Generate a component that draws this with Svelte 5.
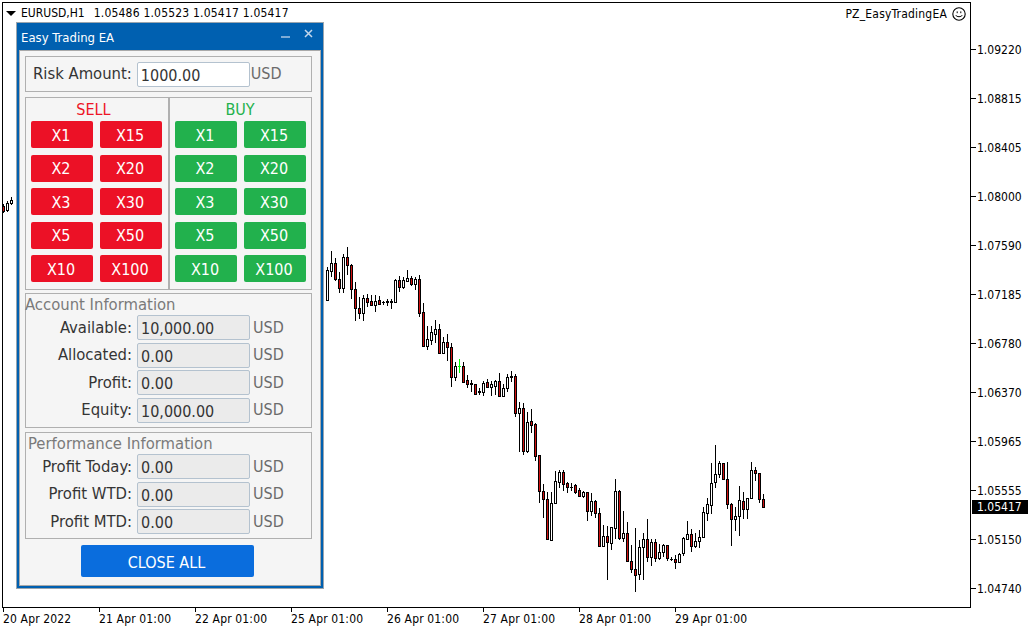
<script lang="ts">
  // values are [x, wickTop, wickBottom, bodyTop, bodyBottom, kind]
  // kind: w = up candle, r = down candle, d = doji, g = green doji
  const candles: [number, number, number, number, number, string][] = [
    [327, 267, 301, 270, 300, "w"], [331, 251, 277, 263, 271, "w"], [335, 258, 281, 263, 279, "r"],
    [339, 272, 293, 279, 288, "r"], [343, 254, 293, 257, 288, "w"], [347, 247, 275, 257, 265, "r"],
    [351, 264, 299, 265, 289, "r"], [355, 282, 321, 289, 308, "r"], [359, 297, 319, 308, 313, "r"],
    [363, 295, 321, 298, 313, "w"], [367, 294, 307, 298, 302, "r"], [371, 295, 306, 301, 305, "r"],
    [375, 295, 312, 301, 305, "w"], [379, 296, 305, 300, 304, "r"], [383, 301, 305, 302, 303, "d"],
    [387, 299, 306, 301, 303, "d"], [391, 299, 309, 301, 303, "d"], [395, 279, 303, 280, 302, "w"],
    [399, 276, 292, 280, 287, "r"], [403, 277, 289, 280, 287, "w"], [407, 270, 282, 278, 281, "w"],
    [411, 276, 286, 278, 284, "r"], [415, 277, 290, 279, 284, "w"], [419, 275, 317, 279, 313, "r"],
    [423, 303, 346, 312, 346, "r"], [427, 326, 350, 339, 346, "w"], [431, 326, 345, 332, 340, "w"],
    [435, 320, 343, 329, 334, "w"], [439, 324, 354, 329, 353, "r"], [443, 337, 353, 342, 353, "w"],
    [447, 334, 361, 342, 347, "r"], [451, 343, 387, 347, 377, "r"], [455, 362, 381, 366, 377, "w"],
    [459, 359, 373, 366, 367, "g"], [463, 362, 383, 366, 382, "r"], [467, 375, 388, 380, 384, "r"],
    [471, 380, 392, 383, 385, "d"], [475, 384, 395, 384, 394, "r"], [479, 388, 395, 391, 393, "d"],
    [483, 381, 396, 383, 392, "w"], [487, 379, 387, 382, 387, "r"], [491, 381, 396, 384, 387, "w"],
    [495, 380, 395, 381, 386, "w"], [499, 373, 397, 381, 396, "r"], [503, 384, 397, 388, 396, "w"],
    [507, 374, 392, 377, 388, "w"], [511, 371, 382, 376, 378, "d"], [515, 374, 417, 376, 413, "r"],
    [519, 402, 452, 408, 413, "w"], [523, 403, 455, 408, 451, "r"], [527, 412, 453, 422, 451, "w"],
    [531, 409, 433, 421, 425, "r"], [535, 423, 461, 424, 456, "r"], [539, 455, 503, 455, 491, "r"],
    [543, 484, 518, 491, 499, "r"], [547, 492, 540, 499, 539, "r"], [551, 492, 541, 503, 540, "w"],
    [555, 471, 503, 481, 503, "w"], [559, 470, 488, 472, 482, "w"], [563, 470, 491, 472, 484, "r"],
    [567, 482, 493, 483, 487, "r"], [571, 483, 491, 487, 488, "d"], [575, 484, 494, 485, 492, "r"],
    [579, 488, 497, 490, 496, "r"], [583, 491, 498, 492, 496, "w"], [587, 492, 521, 492, 511, "r"],
    [591, 493, 516, 501, 511, "w"], [595, 500, 518, 501, 513, "r"], [599, 508, 547, 513, 546, "r"],
    [603, 525, 547, 536, 546, "w"], [607, 526, 580, 536, 542, "r"], [611, 527, 550, 527, 543, "w"],
    [615, 479, 539, 491, 528, "w"], [619, 490, 540, 491, 538, "r"], [623, 511, 542, 533, 538, "w"],
    [627, 522, 562, 533, 561, "r"], [631, 545, 573, 561, 569, "r"], [635, 528, 592, 569, 575, "r"],
    [639, 540, 580, 547, 574, "w"], [643, 533, 580, 539, 547, "w"], [647, 519, 562, 539, 557, "r"],
    [651, 539, 566, 542, 557, "w"], [655, 539, 562, 542, 558, "r"], [659, 544, 560, 552, 558, "w"],
    [663, 544, 557, 545, 552, "w"], [667, 545, 561, 545, 558, "r"], [671, 557, 561, 559, 560, "d"],
    [675, 555, 569, 559, 562, "r"], [679, 553, 563, 554, 562, "w"], [683, 537, 556, 538, 553, "w"],
    [687, 521, 540, 534, 539, "w"], [691, 529, 552, 534, 546, "r"], [695, 533, 548, 541, 546, "w"],
    [699, 530, 548, 537, 541, "w"], [703, 507, 538, 512, 537, "w"], [707, 498, 521, 504, 513, "w"],
    [711, 463, 514, 483, 505, "w"], [715, 445, 488, 474, 482, "w"], [719, 461, 478, 463, 474, "w"],
    [723, 463, 480, 463, 479, "r"], [727, 462, 509, 479, 504, "r"], [731, 503, 546, 504, 519, "r"],
    [735, 507, 531, 516, 519, "w"], [739, 486, 536, 500, 516, "w"], [743, 492, 519, 501, 509, "r"],
    [747, 498, 519, 498, 509, "w"], [751, 462, 499, 470, 498, "w"], [755, 467, 481, 470, 473, "r"],
    [759, 473, 503, 473, 499, "r"], [763, 494, 507, 499, 507, "r"],
    // the few bars left of the panel
    [3, 204, 213, 206, 211, "r"], [7, 201, 212, 203, 210, "w"], [11, 197, 205, 200, 203, "w"],
  ];

  const prices = [
    ["1.09220", 49], ["1.08815", 98], ["1.08405", 147], ["1.08000", 196], ["1.07590", 245],
    ["1.07185", 294], ["1.06780", 343], ["1.06370", 392], ["1.05965", 441], ["1.05555", 490],
    ["1.05150", 539], ["1.04740", 588],
  ] as [string, number][];

  const dates = [
    ["20 Apr 2022", 3], ["21 Apr 01:00", 99], ["22 Apr 01:00", 195], ["25 Apr 01:00", 291],
    ["26 Apr 01:00", 387], ["27 Apr 01:00", 483], ["28 Apr 01:00", 579], ["29 Apr 01:00", 675],
  ] as [string, number][];

  const multipliers = ["X1", "X15", "X2", "X20", "X3", "X30", "X5", "X50", "X10", "X100"];

  const account = [
    ["Available:", "10,000.00"], ["Allocated:", "0.00"], ["Profit:", "0.00"], ["Equity:", "10,000.00"],
  ];
  const performance = [
    ["Profit Today:", "0.00"], ["Profit WTD:", "0.00"], ["Profit MTD:", "0.00"],
  ];
</script>

<div class="terminal">
  <svg class="chart" width="1034" height="631" viewBox="0 0 1034 631" shape-rendering="crispEdges">
    <rect x="2.5" y="2.5" width="968" height="605" fill="#fff" stroke="#000" />
    {#each prices as [, y]}
      <line x1="971" x2="976" y1={y + 0.5} y2={y + 0.5} stroke="#000" />
    {/each}
    {#each dates as [, x]}
      <line x1={x + 0.5} x2={x + 0.5} y1="608" y2="612" stroke="#000" />
    {/each}
    {#each candles as [x, hi, lo, top, bottom, kind]}
      <line x1={x + 0.5} x2={x + 0.5} y1={hi} y2={lo} stroke={kind === "g" ? "#00ff00" : "#000"} />
      {#if kind === "d" || kind === "g"}
        <rect x={x - 1} y={top} width="3" height={Math.max(bottom - top, 1)} fill={kind === "g" ? "#00ff00" : "#000"} />
      {:else}
        <rect x={x - 0.5} y={top + 0.5} width="2" height={bottom - top} fill={kind === "r" ? "#d01010" : "#fff"} stroke="#000" />
      {/if}
    {/each}
  </svg>

  <div class="symbol">
    <span class="arrow"></span>
    <span>EURUSD,H1</span>
    <span class="ohlc">1.05486 1.05523 1.05417 1.05417</span>
  </div>

  <div class="ea-name">
    <span>PZ_EasyTradingEA</span>
    <svg width="14" height="14" viewBox="0 0 14 14" fill="none" stroke="#000">
      <circle cx="7" cy="7" r="6.2" stroke-width="1.1" />
      <path d="M3.8 8.2c.9 2 5.5 2 6.4 0" />
      <path d="M5.2 4.4v1.8M8.8 4.4v1.8" />
    </svg>
  </div>

  {#each prices as [label, y]}
    <span class="price" style="top: {y - 6}px">{label}</span>
  {/each}
  <span class="price current">1.05417</span>

  {#each dates as [label, x]}
    <span class="date" style="left: {x}px">{label}</span>
  {/each}

  <section class="panel">
    <header class="title">
      <span>Easy Trading EA</span>
      <span class="controls">
        <svg width="10" height="10" viewBox="0 0 10 10"><path d="M0 8h9" stroke="#9ebfe0" stroke-width="1.6" /></svg>
        <svg width="10" height="10" viewBox="0 0 10 10"><path d="M1 1l7 7M8 1L1 8" stroke="#c3d7ec" stroke-width="1.5" /></svg>
      </span>
    </header>
    <div class="body">
      <div class="group risk">
        <span class="label">Risk Amount:</span>
        <span class="field input">1000.00</span>
        <span class="unit">USD</span>
      </div>

      <div class="group trade">
        <div class="side sell">
          <div class="side-title">SELL</div>
          <div class="buttons">
            {#each multipliers as m}
              <button>{m}</button>
            {/each}
          </div>
        </div>
        <div class="side buy">
          <div class="side-title">BUY</div>
          <div class="buttons">
            {#each multipliers as m}
              <button>{m}</button>
            {/each}
          </div>
        </div>
      </div>

      <div class="group info account">
        <div class="heading">Account Information</div>
        {#each account as [label, value]}
          <div class="row">
            <span class="label">{label}</span>
            <span class="field">{value}</span>
            <span class="unit">USD</span>
          </div>
        {/each}
      </div>

      <div class="group info perf">
        <div class="heading">Performance Information</div>
        {#each performance as [label, value]}
          <div class="row">
            <span class="label">{label}</span>
            <span class="field">{value}</span>
            <span class="unit">USD</span>
          </div>
        {/each}
      </div>

      <button class="close-all">CLOSE ALL</button>
    </div>
  </section>
</div>

<style>
  :global(body) {
    margin: 0;
    background: #fff;
  }

  .terminal {
    position: relative;
    width: 1034px;
    height: 631px;
    overflow: hidden;
    font-family: "DejaVu Sans Condensed", "DejaVu Sans", sans-serif;
    font-stretch: condensed;
    font-size: 12px;
    line-height: 14px;
    color: #000;
  }

  .chart {
    position: absolute;
    inset: 0;
  }

  .symbol {
    position: absolute;
    left: 6px;
    top: 6px;
    display: flex;
    align-items: center;
  }

  .arrow {
    width: 0;
    height: 0;
    margin-right: 5px;
    border-left: 5px solid transparent;
    border-right: 5px solid transparent;
    border-top: 5px solid #000;
  }

  .ohlc {
    margin-left: 9px;
    letter-spacing: 0.2px;
  }

  .ea-name {
    position: absolute;
    right: 68px;
    top: 7px;
    display: flex;
    align-items: center;
    gap: 5px;
    letter-spacing: 0.2px;
  }

  .price {
    position: absolute;
    left: 977px;
  }

  .current {
    top: 500px;
    left: 972px;
    width: 56px;
    padding-left: 5px;
    box-sizing: border-box;
    background: #000;
    color: #fff;
  }

  .date {
    position: absolute;
    top: 612px;
    letter-spacing: 0.15px;
  }

  .panel {
    position: absolute;
    left: 16px;
    top: 22px;
    width: 308px;
    height: 567px;
    box-sizing: border-box;
    display: flex;
    flex-direction: column;
    background: #0060b0;
    border: 1px solid #9aa5ae;
  }

  .title {
    flex: none;
    height: 27px;
    padding: 2px 9px 0 4px;
    box-sizing: border-box;
    display: flex;
    align-items: center;
    justify-content: space-between;
    color: #fff;
    font-size: 13px;
  }

  .controls {
    display: flex;
    gap: 13px;
    margin-top: -7px;
  }

  .body {
    flex: 1;
    margin: 0 2px 2px;
    padding: 5px 8px 0 5px;
    display: flex;
    flex-direction: column;
    box-sizing: border-box;
    background: #f5f5f5;
    border: 1px solid #a9a9a9;
  }

  .group {
    box-sizing: border-box;
    border: 1px solid #b0b0b0;
  }

  .risk {
    height: 36px;
    display: flex;
    align-items: center;
    padding-left: 7px;
    gap: 5px;
  }

  .label {
    color: #343434;
    font-size: 16.5px;
    line-height: 20px;
    white-space: nowrap;
  }

  .field {
    box-sizing: border-box;
    width: 113px;
    height: 25px;
    padding-left: 3px;
    flex: none;
    background: #ebebeb;
    border: 1px solid #b4c2cf;
    border-radius: 2px;
    color: #343434;
    font-size: 16px;
    line-height: 25px;
  }

  .field.input {
    background: #fff;
  }

  .unit {
    color: #6b6b6b;
    font-size: 16px;
    line-height: 20px;
    margin-left: -4px;
  }

  .trade {
    height: 193px;
    margin-top: 5px;
    display: flex;
  }

  .side {
    flex: none;
    width: 143px;
    padding: 3px 5px 0;
    box-sizing: border-box;
  }

  .sell {
    border-right: 2px solid #b0b0b0;
    width: 144px;
  }

  .side-title {
    font-size: 16px;
    line-height: 18px;
    text-align: center;
  }

  .sell .side-title {
    color: #ee1526;
    padding-right: 7px;
  }

  .buy .side-title {
    color: #24b14c;
    padding-right: 3px;
  }

  .buttons {
    margin-top: 2px;
    display: grid;
    grid-template-columns: 62px 62px;
    grid-auto-rows: 27px;
    column-gap: 7px;
    row-gap: 6.5px;
  }

  .buttons button {
    padding: 1px 2px 0 0;
    border: 0;
    border-radius: 2px;
    color: #fff;
    font-family: inherit;
    font-stretch: inherit;
    font-size: 16px;
  }

  .sell button {
    background: #ec1126;
  }

  .buy button {
    background: #22b14d;
  }

  .info {
    padding-top: 2px;
  }

  .account {
    height: 135px;
    margin-top: 3px;
  }

  .perf {
    height: 107px;
    margin-top: 4px;
  }

  .heading {
    color: #7a7a7a;
    font-size: 16.5px;
    line-height: 18px;
    margin-left: -1px;
  }

  .perf .heading {
    margin-left: 2px;
  }

  .row {
    height: 27.5px;
    display: flex;
    align-items: center;
  }

  .row .label {
    width: 106px;
    text-align: right;
    margin-right: 5px;
    flex: none;
  }

  .row .unit {
    margin-left: 3px;
  }

  .close-all {
    align-self: flex-start;
    width: 173px;
    height: 32px;
    margin: 6px 0 0 56px;
    padding: 2px 2px 0 0;
    border: 0;
    border-radius: 2px;
    background: #0a6ddd;
    color: #fff;
    font-family: inherit;
    font-stretch: inherit;
    font-size: 16px;
  }
</style>
